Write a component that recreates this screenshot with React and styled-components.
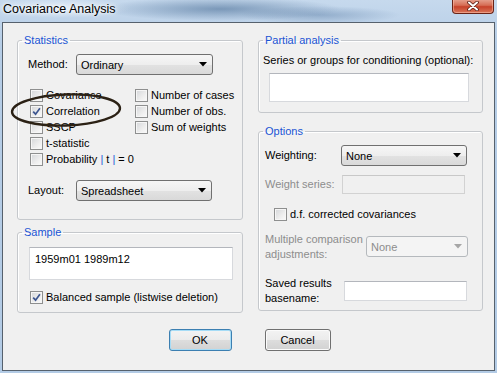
import React from 'react';
import styled, { createGlobalStyle } from 'styled-components';

const GlobalStyle = createGlobalStyle`
  html, body {
    margin: 0;
    padding: 0;
  }
  body {
    font-family: "Liberation Sans", Arial, sans-serif;
    font-size: 11px;
    color: #000;
    background: #b9cfe6;
  }
`;

const Window = styled.div`
  position: relative;
  width: 497px;
  height: 373px;
  box-sizing: border-box;
  display: flex;
  flex-direction: column;
  overflow: hidden;
  background:
    radial-gradient(ellipse 120px 12px at 220px 9px, rgba(74, 110, 150, 0.6), transparent),
    radial-gradient(ellipse 80px 9px at 320px 15px, rgba(90, 125, 165, 0.45), transparent),
    radial-gradient(ellipse 70px 10px at 60px 8px, rgba(240, 246, 252, 0.7), transparent),
    linear-gradient(180deg, #c6d9ed 0%, #b6cde6 12%, #b3cbe5 100%);
`;

const TitleBar = styled.div`
  height: 22px;
  flex: none;
  display: flex;
  justify-content: space-between;
  align-items: flex-start;
  padding-left: 3px;
`;

const Title = styled.div`
  font-size: 12.5px;
  line-height: 16px;
  padding-top: 1px;
  color: #000;
  text-shadow: 0 0 6px #fff, 0 0 3px #fff;
`;

const CloseButton = styled.div`
  width: 42px;
  height: 15px;
  margin-right: 3px;
  margin-top: -1px;
  box-sizing: border-box;
  border: 1px solid #6a2418;
  border-top: none;
  border-radius: 0 0 4px 4px;
  background: linear-gradient(180deg, #e7a593 0%, #d66d55 45%, #c7412a 55%, #d9775a 100%);
  box-shadow: inset 0 0 0 1px rgba(255, 200, 180, 0.5);
  display: flex;
  align-items: center;
  justify-content: center;
`;

const Client = styled.div`
  flex: 1;
  margin: 0 2px 2px 2px;
  border: 1px solid #56616d;
  background: #f0f0f0;
  display: flex;
  flex-direction: column;
`;

const Columns = styled.div`
  display: grid;
  grid-template-columns: 226px 225px;
  column-gap: 15px;
  padding: 10px 0 0 14px;
  align-items: start;
`;

const Column = styled.div`
  display: flex;
  flex-direction: column;
  gap: ${p => p.$gap}px;
`;

const Group = styled.fieldset`
  margin: 0;
  padding: 0;
  min-width: 0;
  border: 1px solid #c5c8cc;
  border-radius: 3px;
  box-shadow: inset 1px 1px 0 #fff;
`;

const Legend = styled.legend`
  margin-left: 4px;
  padding: 0 2px;
  line-height: 14px;
  color: #1a54d4;
`;

const GroupBody = styled.div`
  display: flex;
  flex-direction: column;
  padding: ${p => p.$pad};
`;

const FieldRow = styled.div`
  display: flex;
  align-items: center;
  height: ${p => p.$h}px;
  margin-top: ${p => p.$mt || 0}px;
`;

const Label = styled.div`
  width: ${p => p.$w}px;
  flex: none;
  line-height: 15px;
  color: ${p => (p.$disabled ? '#8d8d8d' : '#000')};
`;

const SelectBox = styled.div`
  width: ${p => p.$w}px;
  height: 21px;
  box-sizing: border-box;
  display: flex;
  align-items: center;
  justify-content: space-between;
  padding: 0 5px 0 4px;
  border: 1px solid ${p => (p.$disabled ? '#b5b9bd' : '#707070')};
  border-radius: 3px;
  color: ${p => (p.$disabled ? '#8d8d8d' : '#000')};
  background: ${p =>
    p.$disabled
      ? '#f4f4f4'
      : 'linear-gradient(180deg, #f6f6f6 0%, #eeeeee 50%, #e2e2e2 51%, #d9d9d9 100%)'};
`;

const TextBox = styled.div`
  width: ${p => p.$w}px;
  height: ${p => p.$h}px;
  box-sizing: border-box;
  margin: ${p => p.$m || 0};
  padding: 4px 5px;
  border: 1px solid ${p => (p.$disabled ? '#d2d2d2' : '#d7d9dd')};
  border-top-color: ${p => (p.$disabled ? '#c8c8c8' : '#b3b6bc')};
  background: ${p => (p.$disabled ? '#f0f0f0' : '#fff')};
  line-height: 14px;
`;

const CheckColumns = styled.div`
  display: grid;
  grid-template-columns: 105px auto;
  padding-left: 2px;
  margin-top: 12px;
`;

const CheckStack = styled.div`
  display: flex;
  flex-direction: column;
`;

const CheckRow = styled.div`
  display: flex;
  align-items: center;
  gap: 3px;
  height: 16px;
  margin-top: ${p => p.$mt || 0}px;
  margin-left: ${p => p.$ml || 0}px;
  white-space: nowrap;
`;

const Box = styled.span`
  width: 13px;
  height: 13px;
  flex: none;
  box-sizing: border-box;
  border: 1px solid #8e8f8f;
  background: linear-gradient(135deg, #d4d6d9 0%, #eeeeee 60%, #fbfbfb 100%);
  box-shadow: inset 0 0 0 1px #f6f6f6;
  display: flex;
  align-items: center;
  justify-content: center;
`;

const Bar = styled.span`
  color: #1f5fd6;
`;

const ButtonRow = styled.div`
  display: flex;
  justify-content: center;
  gap: 33px;
  margin-top: 16px;
  padding-left: 2px;
`;

const Button = styled.div`
  width: ${p => p.$w}px;
  height: 22px;
  box-sizing: border-box;
  display: flex;
  align-items: center;
  justify-content: center;
  border: 1px solid ${p => (p.$default ? '#3c7fb1' : '#707070')};
  border-radius: 3px;
  background: linear-gradient(180deg, #f3f3f3 0%, #ebebeb 50%, #dddddd 51%, #d2d2d2 100%);
  box-shadow: ${p => (p.$default ? 'inset 0 0 0 1px #a6dcf6' : 'inset 0 0 0 1px #fbfbfb')};
`;

const Annotation = styled.svg`
  position: absolute;
  left: 8px;
  top: 90px;
  pointer-events: none;
`;

const Arrow = ({ disabled }) => (
  <svg width="8" height="5" viewBox="0 0 8 5">
    <path d="M0 0 L8 0 L4 4.5 Z" fill={disabled ? '#a6a6a6' : '#000'} />
  </svg>
);

const Select = ({ w, disabled, children }) => (
  <SelectBox $w={w} $disabled={disabled}>
    <span>{children}</span>
    <Arrow disabled={disabled} />
  </SelectBox>
);

const Check = ({ checked, children, mt, ml }) => (
  <CheckRow $mt={mt} $ml={ml}>
    <Box>
      {checked && (
        <svg width="9" height="9" viewBox="0 0 9 9">
          <path d="M1.2 4.6 L3.6 7.2 L7.9 1.3" fill="none" stroke="#3d5690" strokeWidth="1.7" />
        </svg>
      )}
    </Box>
    <span>{children}</span>
  </CheckRow>
);

export default function App() {
  return (
    <>
      <GlobalStyle />
      <Window>
        <TitleBar>
          <Title>Covariance Analysis</Title>
          <CloseButton>
            <svg width="12" height="10" viewBox="0 0 12 10">
              <path d="M2 1.5 L10 8.5 M10 1.5 L2 8.5" stroke="#5a1c12" strokeWidth="3.6" strokeLinecap="round" />
              <path d="M2 1.5 L10 8.5 M10 1.5 L2 8.5" stroke="#fff" strokeWidth="2" strokeLinecap="round" />
            </svg>
          </CloseButton>
        </TitleBar>
        <Client>
          <Columns>
            <Column $gap={5}>
              <Group>
                <Legend>Statistics</Legend>
                <GroupBody $pad="7px 0 18px 10px">
                  <FieldRow $h={21}>
                    <Label $w={48}>Method:</Label>
                    <Select w={137}>Ordinary</Select>
                  </FieldRow>
                  <CheckColumns>
                    <CheckStack>
                      <Check>Covariance</Check>
                      <Check checked>Correlation</Check>
                      <Check>SSCP</Check>
                      <Check>t-statistic</Check>
                      <Check>
                        Probability <Bar>|</Bar> t <Bar>|</Bar> = 0
                      </Check>
                    </CheckStack>
                    <CheckStack>
                      <Check>Number of cases</Check>
                      <Check>Number of obs.</Check>
                      <Check>Sum of weights</Check>
                    </CheckStack>
                  </CheckColumns>
                  <FieldRow $h={21} $mt={13}>
                    <Label $w={48}>Layout:</Label>
                    <Select w={136}>Spreadsheet</Select>
                  </FieldRow>
                </GroupBody>
              </Group>
              <Group>
                <Legend>Sample</Legend>
                <GroupBody $pad="0 0 7px 0">
                  <TextBox $w={204} $h={33} $m="8px 0 0 11px">1959m01 1989m12</TextBox>
                  <Check checked mt={9} ml={12}>
                    Balanced sample (listwise deletion)
                  </Check>
                </GroupBody>
              </Group>
            </Column>
            <Column $gap={11}>
              <Group>
                <Legend>Partial analysis</Legend>
                <GroupBody $pad="6px 0 10px 0">
                  <FieldRow $h={14}>
                    <Label $w={215} style={{ paddingLeft: 4 }}>
                      Series or groups for conditioning (optional):
                    </Label>
                  </FieldRow>
                  <TextBox $w={200} $h={29} $m="6px 0 0 10px" />
                </GroupBody>
              </Group>
              <Group>
                <Legend>Options</Legend>
                <GroupBody $pad="7px 0 4px 6px">
                  <FieldRow $h={21}>
                    <Label $w={76}>Weighting:</Label>
                    <Select w={126}>None</Select>
                  </FieldRow>
                  <FieldRow $h={19} $mt={9}>
                    <Label $w={77} $disabled>Weight series:</Label>
                    <TextBox $w={123} $h={19} $disabled />
                  </FieldRow>
                  <Check mt={12} ml={9}>d.f. corrected covariances</Check>
                  <FieldRow $h={31} $mt={9}>
                    <Label $w={101} $disabled>
                      Multiple comparison
                      <br />
                      adjustments:
                    </Label>
                    <Select w={102} disabled>None</Select>
                  </FieldRow>
                  <FieldRow $h={30} $mt={14}>
                    <Label $w={79}>
                      Saved results
                      <br />
                      basename:
                    </Label>
                    <TextBox $w={123} $h={20} />
                  </FieldRow>
                </GroupBody>
              </Group>
            </Column>
          </Columns>
          <ButtonRow>
            <Button $w={63} $default>OK</Button>
            <Button $w={66}>Cancel</Button>
          </ButtonRow>
        </Client>
        <Annotation width="118" height="42" viewBox="0 0 118 42">
          <ellipse
            cx="58"
            cy="20"
            rx="54"
            ry="15.5"
            fill="none"
            stroke="#2b2115"
            strokeWidth="2.4"
            transform="rotate(-2 58 20)"
          />
        </Annotation>
      </Window>
    </>
  );
}
